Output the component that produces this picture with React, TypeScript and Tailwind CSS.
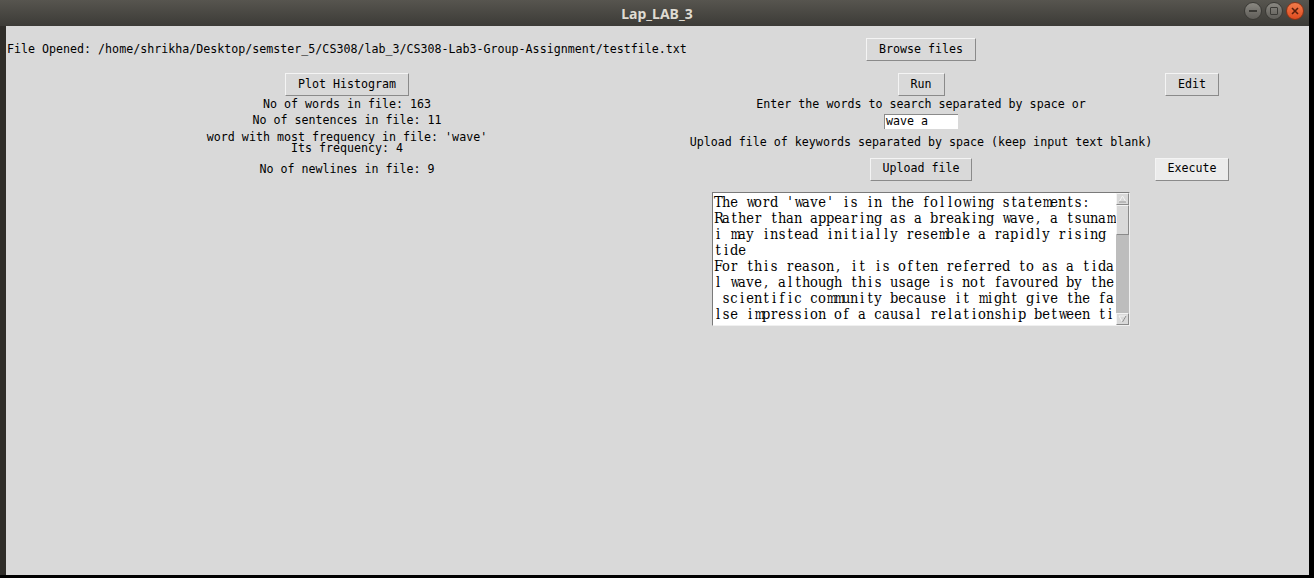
import React from "react";

const mono = { fontFamily: '"DejaVu Sans Mono", "Liberation Mono", monospace' };

function TkButton({ label, w, light }: { label: string; w: string; light?: boolean }) {
  return (
    <div
      className={`${w} h-[23px] flex items-center justify-center text-[11.65px] text-black border border-t-[#f4f4f4] border-l-[#f4f4f4] border-b-[#8a8a8a] border-r-[#8a8a8a] ${light ? "bg-[#ececec]" : "bg-[#d9d9d9]"}`}
      style={mono}
    >
      {label}
    </div>
  );
}

const lines = [
  "The word 'wave' is in the following statements:",
  "Rather than appearing as a breaking wave, a tsunam",
  "i may instead initially resemble a rapidly rising",
  "tide",
  "For this reason, it is often referred to as a tida",
  "l wave, although this usage is not favoured by the",
  " scientific community because it might give the fa",
  "lse impression of a causal relationship between ti",
];

const wide = new Set(["m", "w", "M", "W"]);

export default function App() {
  return (
    <div className="w-[1314px] h-[578px] bg-black overflow-hidden">
      <div className="w-[1309px] h-[575px] bg-[#2f2d29] flex flex-col">
        {/* Title bar */}
        <div className="relative h-[26px] w-full bg-gradient-to-b from-[#57554f] to-[#3c3b37] flex items-center justify-center">
          <span
            className="text-[14px] font-bold text-[#dfdbd2] ml-[5px]"
            style={{ fontFamily: '"Noto Sans", "Open Sans", sans-serif' }}
          >
            Lap_LAB_3
          </span>
          <div className="absolute right-[5px] top-[2px] flex gap-[3px]">
            <div className="w-[18px] h-[18px] rounded-full bg-gradient-to-b from-[#8a8882] to-[#5f5d58] border border-[#3a3935] flex items-center justify-center">
              <div className="w-[8px] h-[2px] bg-[#3b3a36]" />
            </div>
            <div className="w-[18px] h-[18px] rounded-full bg-gradient-to-b from-[#8a8882] to-[#5f5d58] border border-[#3a3935] flex items-center justify-center">
              <div className="w-[8px] h-[8px] border-[1.5px] border-[#3b3a36] rounded-[1px]" />
            </div>
            <div className="w-[18px] h-[18px] rounded-full bg-gradient-to-b from-[#f37b4a] to-[#df4b1e] border border-[#8a3418] flex items-center justify-center">
              <svg width="8" height="8" viewBox="0 0 8 8">
                <path d="M1 1 L7 7 M7 1 L1 7" stroke="#5a1e0c" strokeWidth="1.6" />
              </svg>
            </div>
          </div>
        </div>

        {/* Content */}
        <div className="flex-1 ml-[6px] bg-[#d9d9d9] text-black" style={mono}>
          <div className="grid grid-cols-[682px_466px_76px] grid-rows-[11px_25px_10px_25px_15px_18px_26px_26px_10px_134px] text-[11.65px]">
            <div className="col-span-3" />

            {/* row 0 */}
            <div className="flex items-center pl-[1px] whitespace-nowrap">
              File Opened: /home/shrikha/Desktop/semster_5/CS308/lab_3/CS308-Lab3-Group-Assignment/testfile.txt
            </div>
            <div className="flex items-center justify-center">
              <TkButton label="Browse files" w="w-[110px]" />
            </div>
            <div />

            <div className="col-span-3" />

            {/* row 1 */}
            <div className="flex items-center justify-center">
              <TkButton label="Plot Histogram" w="w-[124px]" />
            </div>
            <div className="flex items-center justify-center">
              <TkButton label="Run" w="w-[47px]" />
            </div>
            <div className="flex items-center justify-center">
              <TkButton label="Edit" w="w-[54px]" />
            </div>

            {/* row 2 */}
            <div className="flex items-center justify-center whitespace-nowrap">No of words in file: 163</div>
            <div className="flex items-center justify-center whitespace-nowrap">
              Enter the words to search separated by space or
            </div>
            <div />

            {/* row 3 */}
            <div className="flex items-center justify-center whitespace-nowrap">No of sentences in file: 11</div>
            <div className="flex items-center justify-center">
              <div className="w-[74px] h-[15px] bg-white border-t border-l border-[#8a8a8a] flex items-center pl-[1px] text-[11.65px] leading-none">
                wave a
              </div>
            </div>
            <div />

            {/* row 4 */}
            <div className="flex flex-col items-center justify-center leading-[11px] whitespace-nowrap">
              <div>word with most frequency in file: 'wave'</div>
              <div>Its frequency: 4</div>
            </div>
            <div className="flex items-center justify-center whitespace-nowrap">
              Upload file of keywords separated by space (keep input text blank)
            </div>
            <div />

            {/* row 5 */}
            <div className="flex items-center justify-center whitespace-nowrap pt-[2px]">No of newlines in file: 9</div>
            <div className="flex items-center justify-center">
              <TkButton label="Upload file" w="w-[102px]" />
            </div>
            <div className="flex items-center justify-center">
              <TkButton label="Execute" w="w-[74px]" light />
            </div>

            <div className="col-span-3" />

            {/* row 6: text area */}
            <div />
            <div className="flex justify-center">
              <div className="w-[418px] h-[134px] flex border border-t-[#7a7a7a] border-l-[#7a7a7a] border-b-[#f0f0f0] border-r-[#f0f0f0]">
                <div
                  className="flex-1 bg-white overflow-hidden pl-[1px] pt-[1px] text-[14.5px] leading-[16px] text-black [font-stretch:condensed]"
                  style={{ fontFamily: '"DejaVu Serif", "Liberation Serif", serif' }}
                >
                  {lines.map((l, i) => (
                    <div key={i} className="flex h-[16px] whitespace-pre">
                      {Array.from(l).map((ch, j) =>
                        wide.has(ch) ? (
                          <span key={j} className="inline-block w-[8px] shrink-0 text-center scale-x-[0.8]">
                            {ch}
                          </span>
                        ) : (
                          <span key={j} className="inline-block w-[8px] shrink-0 text-center">
                            {ch}
                          </span>
                        )
                      )}
                    </div>
                  ))}
                </div>
                <div className="w-[13px] bg-[#bdbdbd] flex flex-col">
                  <div className="h-[12px] bg-[#d9d9d9] border border-t-[#f4f4f4] border-l-[#f4f4f4] border-b-[#8a8a8a] border-r-[#8a8a8a] flex items-center justify-center">
                    <svg width="9" height="8" viewBox="0 0 9 8">
                      <path d="M4.5 1 L8 7 L1 7 Z" fill="#d9d9d9" stroke="#f4f4f4" strokeWidth="1" />
                      <path d="M8 7 L1 7" stroke="#8a8a8a" strokeWidth="1" />
                    </svg>
                  </div>
                  <div className="h-[30px] bg-[#d9d9d9] border border-t-[#f4f4f4] border-l-[#f4f4f4] border-b-[#8a8a8a] border-r-[#8a8a8a]" />
                  <div className="flex-1" />
                  <div className="h-[12px] bg-[#d9d9d9] border border-t-[#f4f4f4] border-l-[#f4f4f4] border-b-[#8a8a8a] border-r-[#8a8a8a] flex items-center justify-center">
                    <svg width="9" height="8" viewBox="0 0 9 8">
                      <path d="M1 1 L8 1 L4.5 7 Z" fill="#d9d9d9" stroke="#f4f4f4" strokeWidth="1" />
                      <path d="M8 1 L4.5 7" stroke="#8a8a8a" strokeWidth="1" />
                    </svg>
                  </div>
                </div>
              </div>
            </div>
            <div />
          </div>
        </div>
      </div>
    </div>
  );
}
